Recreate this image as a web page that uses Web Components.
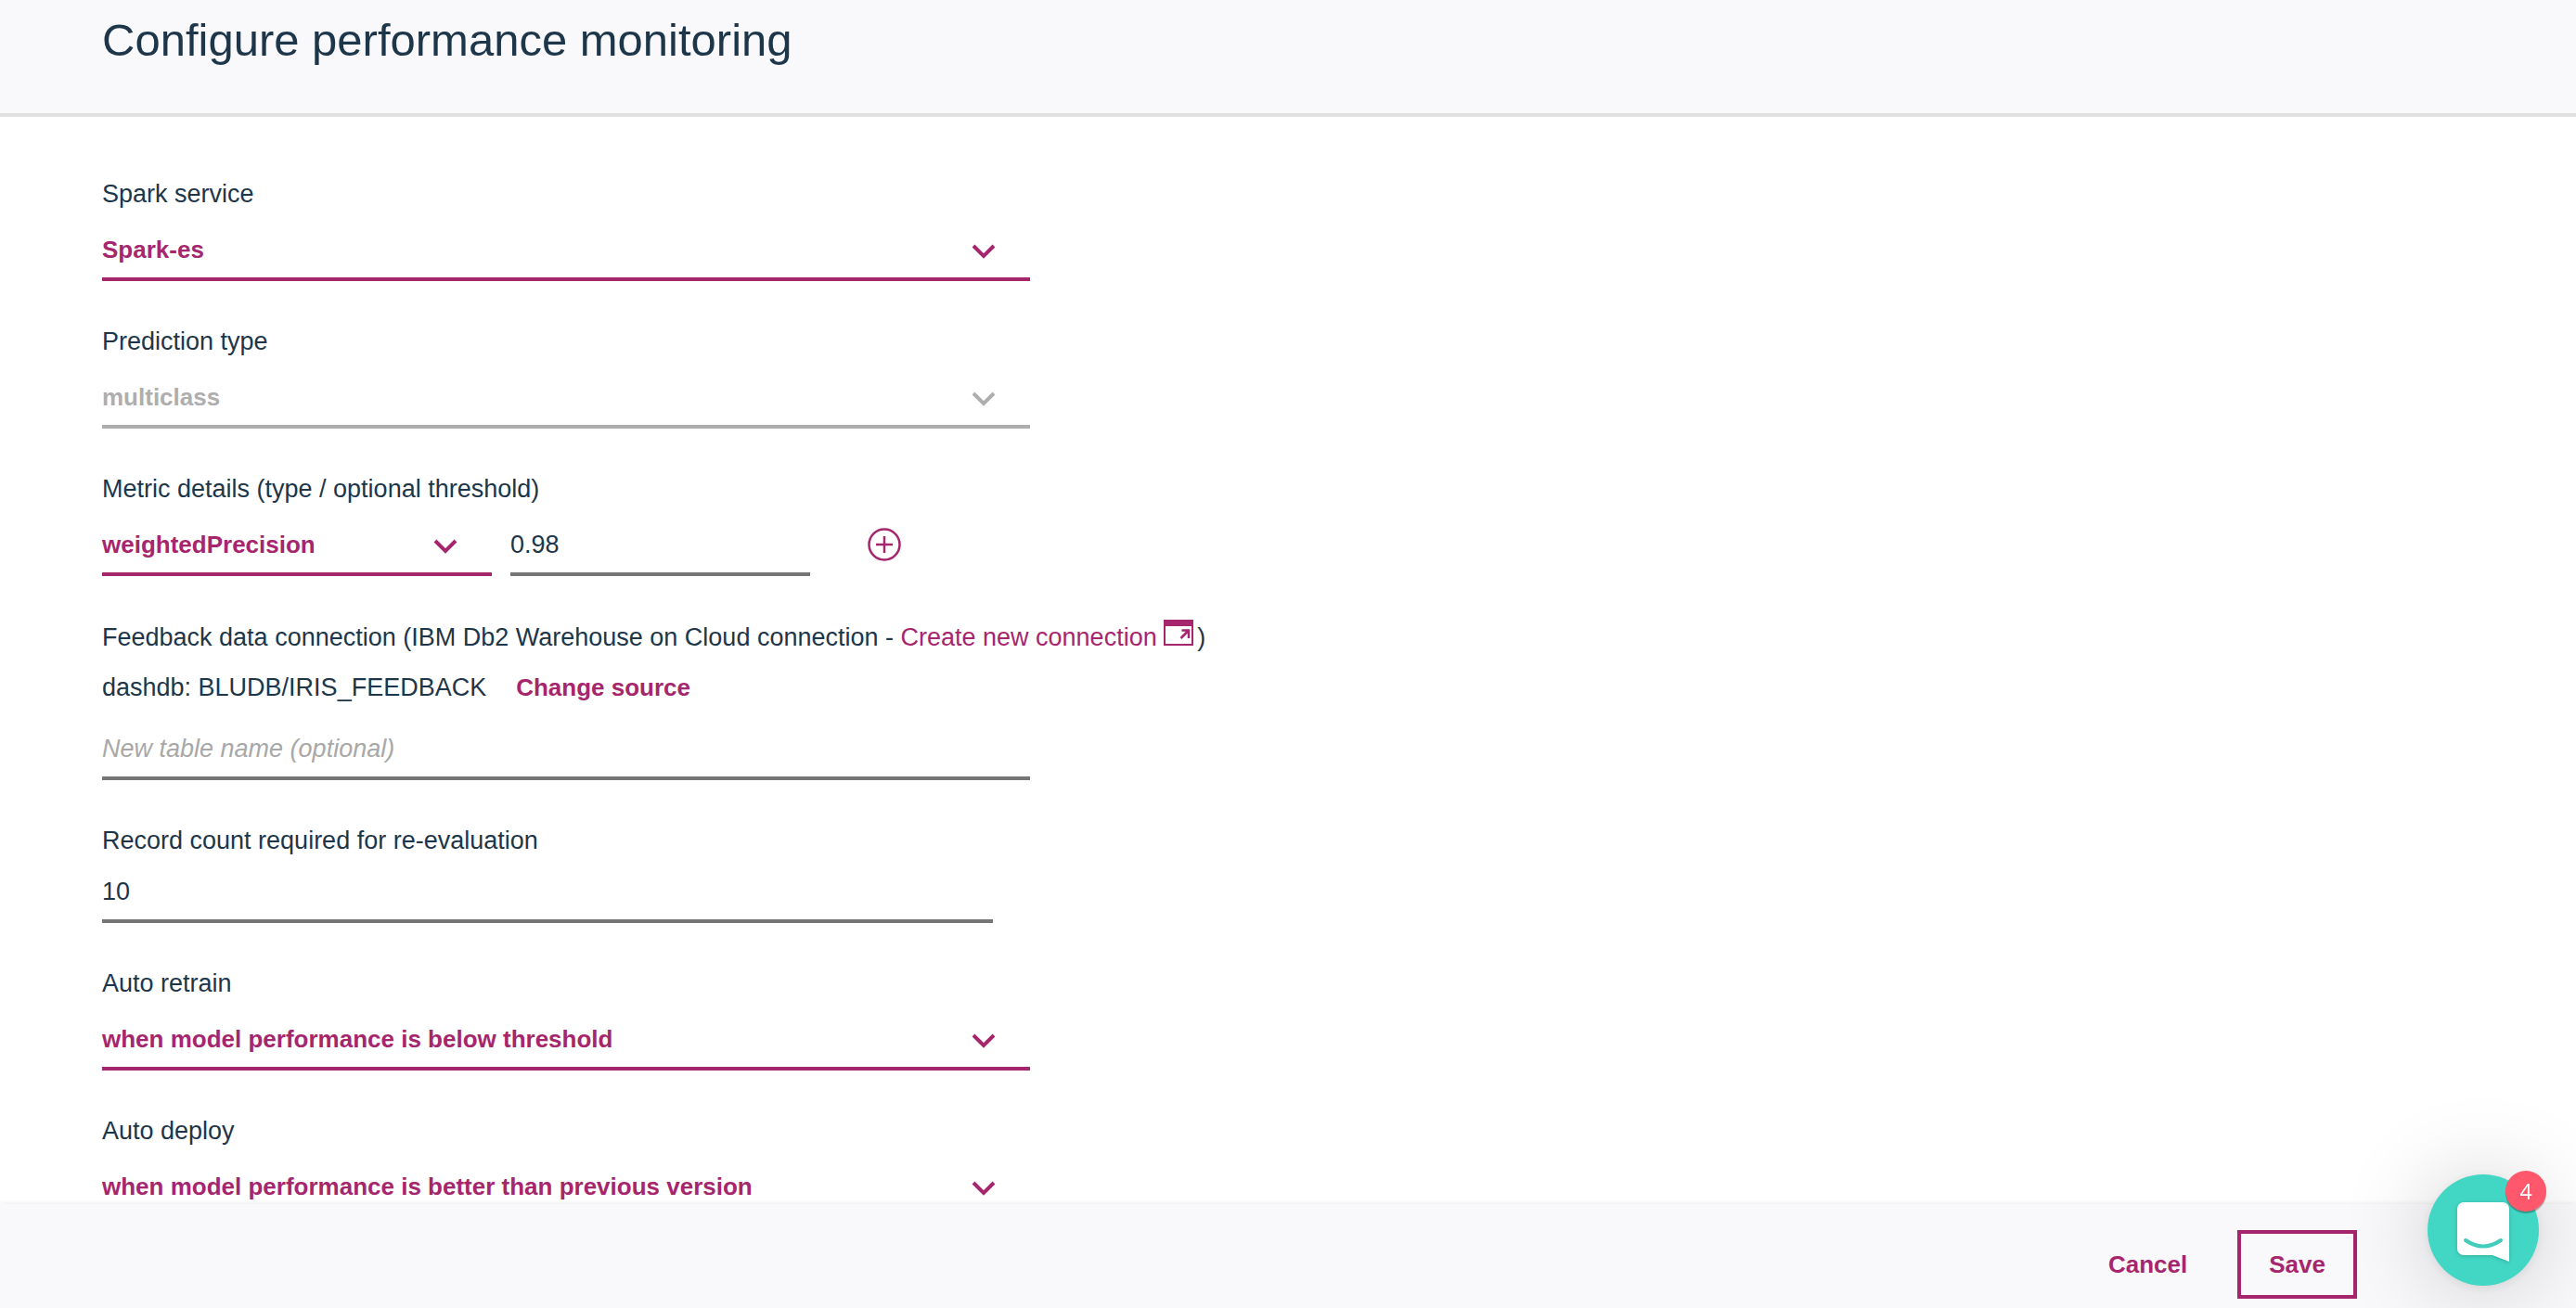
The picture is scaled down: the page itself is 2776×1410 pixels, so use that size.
<!DOCTYPE html>
<html lang="en">
<head>
<meta charset="utf-8">
<title>Configure performance monitoring</title>
<style>
  :root {
    --accent: #a6266e;
    --ink: #1d3649;
    --muted: #aeaeae;
    --rule: #777677;
    --panel: #f9f9fc;
  }
  body {
    margin: 0;
    font: 27px/32px "Liberation Sans", Arial, sans-serif;
    color: var(--ink);
    background: #fff;
  }
</style>
</head>
<body>
<monitor-page></monitor-page>

<script>
const define = (name, html, setup) => {
  const template = document.createElement('template');
  template.innerHTML = html;
  customElements.define(name, class extends HTMLElement {
    constructor() {
      super();
      this.attachShadow({ mode: 'open' }).append(template.content.cloneNode(true));
    }
    connectedCallback() {
      if (setup) setup(this, this.shadowRoot);
    }
  });
};

define('page-header', `
  <style>
    :host { display: block; flex: none; padding: 15px 110px 51px; background: var(--panel); border-bottom: 4px solid #e0e0e0; }
    h1 { margin: 0; font-size: 49px; line-height: 56px; font-weight: 400; }
  </style>
  <h1><slot></slot></h1>`);

/* Labelled drop-down; attributes: label, value, disabled */
define('select-field', `
  <style>
    :host { display: flex; flex-direction: column; gap: 16px; color: var(--accent); }
    :host([disabled]) { color: var(--muted); }
    label { color: var(--ink); }
    label:empty { display: none; }
    .box { display: grid; align-items: center; }
    .box > * { grid-area: 1 / 1; }
    select {
      appearance: none; box-sizing: border-box; width: 100%; margin: 0; padding: 12px 60px 14px 0;
      border: 0; border-bottom: 4px solid currentColor; border-radius: 0; background: none;
      font: bold 26px/32px "Liberation Sans", Arial, sans-serif; color: inherit; opacity: 1;
    }
    svg { justify-self: end; width: 28px; height: 18px; margin: 0 36px 2px 0; pointer-events: none; }
  </style>
  <label for="s"></label>
  <div class="box">
    <select id="s"><option></option></select>
    <svg viewBox="0 0 28 18" fill="none" stroke="currentColor" stroke-width="4"><path d="M3 3l11 11L25 3"/></svg>
  </div>`,
  (host, root) => {
    const select = root.querySelector('select');
    root.querySelector('label').textContent = host.getAttribute('label') || '';
    root.querySelector('option').textContent = host.getAttribute('value');
    select.disabled = host.hasAttribute('disabled');
    if (host.hasAttribute('name')) select.setAttribute('aria-label', host.getAttribute('name'));
  });

/* Labelled text box; attributes: label, value, placeholder, name */
define('text-field', `
  <style>
    :host { display: flex; flex-direction: column; gap: 11px; }
    label:empty { display: none; }
    input {
      box-sizing: border-box; width: 100%; height: 62px; margin: 0; padding: 12px 0 14px;
      border: 0; border-bottom: 4px solid var(--rule); border-radius: 0; background: none;
      font: 27px/32px "Liberation Sans", Arial, sans-serif; color: inherit; outline: 0;
    }
    input::placeholder { color: #a8a8a8; font-style: italic; opacity: 1; }
  </style>
  <label for="i"></label>
  <input id="i" type="text">`,
  (host, root) => {
    const input = root.querySelector('input');
    root.querySelector('label').textContent = host.getAttribute('label') || '';
    input.value = host.getAttribute('value') || '';
    input.placeholder = host.getAttribute('placeholder') || '';
    if (host.hasAttribute('name')) input.setAttribute('aria-label', host.getAttribute('name'));
  });

define('metric-row', `
  <style>
    :host { display: flex; flex-direction: column; gap: 16px; }
    .row { display: flex; align-items: flex-start; padding-bottom: 1px; }
    select-field { width: 420px; margin-right: 20px; }
    text-field { width: 323px; margin-right: 60px; }
    button { display: flex; padding: 8px 0 0; border: 0; background: none; color: var(--accent); }
    svg { width: 40px; height: 40px; }
  </style>
  <div>Metric details (type / optional threshold)</div>
  <div class="row">
    <select-field name="Metric type" value="weightedPrecision"></select-field>
    <text-field name="Threshold" value="0.98"></text-field>
    <button type="button" aria-label="Add metric">
      <svg viewBox="0 0 40 40" fill="none" stroke="currentColor" stroke-width="2.500"><circle cx="20" cy="20" r="16.500"/><path d="M20 11v18M11 20h18"/></svg>
    </button>
  </div>`);

define('feedback-source', `
  <style>
    :host { display: flex; flex-direction: column; gap: 22px; }
    a { color: var(--accent); text-decoration: none; }
    svg { width: 32px; height: 28px; margin: -8px 4px 0 0; vertical-align: baseline; }
    .source { display: flex; gap: 32px; }
    button { padding: 0; border: 0; background: none; color: var(--accent); font: bold 26px/32px "Liberation Sans", Arial, sans-serif; }
    text-field { width: 1000px; }
  </style>
  <div>Feedback data connection (IBM Db2 Warehouse on Cloud connection - <a href="#">Create new connection <svg viewBox="0 0 32 28" fill="none" stroke="currentColor" stroke-width="2"><path d="M0 0h32v7H0z" fill="currentColor" stroke="none"/><path d="M1 5v22h30V5"/><path d="M18.500 20L27 11.500M19.500 11.500h7.500v8.500" stroke-width="2.500"/></svg></a>)</div>
  <div class="source"><span>dashdb: BLUDB/IRIS_FEEDBACK</span><button type="button">Change source</button></div>
  <text-field name="New table name" placeholder="New table name (optional)"></text-field>`);

define('page-footer', `
  <style>
    :host {
      display: flex; flex: none; justify-content: flex-end; gap: 20px; box-sizing: border-box; height: 112px;
      padding: 28px 236px 10px; background: var(--panel); box-shadow: 0 0 6px rgba(0, 0, 0, .1); position: relative;
    }
    button {
      padding: 0 30px; border: 4px solid transparent; background: none; color: var(--accent);
      font: bold 26px/32px "Liberation Sans", Arial, sans-serif;
    }
    .save { border-color: var(--accent); }
  </style>
  <button type="button">Cancel</button>
  <button type="button" class="save">Save</button>`);

define('chat-launcher', `
  <style>
    :host { position: fixed; right: 40px; bottom: 24px; }
    button {
      display: flex; align-items: center; justify-content: center; width: 120px; height: 120px; padding: 0;
      border: 0; border-radius: 50%; background: #42d7c4; box-shadow: 0 2px 12px rgba(0, 0, 0, .08), 0 4px 100px rgba(0, 0, 0, .2);
    }
    svg { width: 56px; height: 68px; overflow: visible; filter: drop-shadow(0 1px 2px rgba(0, 0, 0, .2)); }
    .badge {
      position: absolute; top: -4px; right: -8px; width: 44px; height: 44px; border-radius: 50%;
      background: #ff586d; color: #fff; text-align: center; font: 23px/44px "Open Sans", sans-serif;
      box-shadow: 0 2px 1px rgba(0, 0, 0, .3);
    }
  </style>
  <button type="button" aria-label="Open chat">
    <svg viewBox="0 -2 56 68"><path fill="#fff" d="M7 2h42a7 7 0 0 1 7 7v57l-18-7H7a7 7 0 0 1-7-7V9a7 7 0 0 1 7-7z"/><path d="M9 43q19 13 38 0" fill="none" stroke="#42ccba" stroke-width="4" stroke-linecap="round"/></svg>
  </button>
  <span class="badge">4</span>`);

define('monitor-page', `
  <style>
    :host { display: flex; flex-direction: column; height: 100vh; }
    main { flex: 1; min-height: 0; overflow: hidden; display: flex; flex-direction: column; gap: 49px; padding: 67px 110px 0; }
    main > * { flex: none; }
    select-field { width: 1000px; }
    text-field { width: 960px; }
  </style>
  <page-header>Configure performance monitoring</page-header>
  <main>
    <select-field label="Spark service" value="Spark-es"></select-field>
    <select-field label="Prediction type" value="multiclass" disabled></select-field>
    <metric-row></metric-row>
    <feedback-source></feedback-source>
    <text-field label="Record count required for re-evaluation" value="10"></text-field>
    <select-field label="Auto retrain" value="when model performance is below threshold"></select-field>
    <select-field label="Auto deploy" value="when model performance is better than previous version"></select-field>
  </main>
  <page-footer></page-footer>
  <chat-launcher></chat-launcher>`);
</script>
</body>
</html>
